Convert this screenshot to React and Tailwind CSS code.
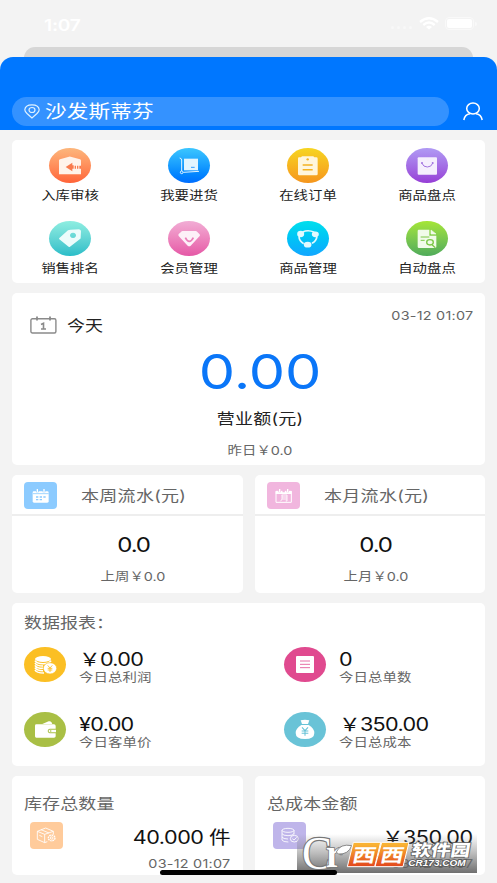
import React from "react";
import clsx from "clsx";

// Wide text: every label of the screen is set 1.2x wider than the font
function Wide({ className, children }) {
  return (
    <span
      className={clsx(
        "block w-fit scale-x-[1.2] whitespace-nowrap leading-none",
        className
      )}
    >
      {children}
    </span>
  );
}

const menuItems = [
  {
    label: "入库审核",
    color: "bg-linear-to-b from-[#fcb67c] to-[#ff6338]",
    icon: (
      <>
        <path d="M30 37Q30 35 33 34L60 26Q62 25 65 26L93 34Q96 35 96 38V79H30Z" fill="#fff3ea" />
        <path d="M50 57L70 44V52H74V62H70V70Z" fill="#f97a4c" />
        <path d="M77 53h4v9h-4zM84 53h4v9h-4zM91 53h5v9h-5z" fill="#f97a4c" />
      </>
    ),
  },
  {
    label: "我要进货",
    color: "bg-linear-to-b from-[#3cc6ff] to-[#006dff]",
    icon: (
      <>
        <rect x="48" y="32" width="42" height="35" fill="#e3f5ff" />
        <path d="M35 30Q41 31 41 36V69M46 73L93 70" stroke="#e3f5ff" strokeWidth="3" fill="none" />
        <circle cx="41" cy="73" r="4" stroke="#e3f5ff" strokeWidth="3" fill="none" />
        <path d="M69 58h11" stroke="#2e9cff" strokeWidth="3" />
      </>
    ),
  },
  {
    label: "在线订单",
    color: "bg-linear-to-b from-[#f6d522] to-[#f5951d]",
    icon: (
      <>
        <path d="M36 28H42L45 25H79L82 28H88Q92 28 92 32V78Q92 82 88 82H37Q33 82 33 78V32Q33 28 36 28Z" fill="#fff6dc" />
        <path d="M47 51h30M47 65h30" stroke="#f4b322" strokeWidth="4.5" />
        <circle cx="62" cy="34" r="3.5" fill="#f4b322" />
      </>
    ),
  },
  {
    label: "商品盘点",
    color: "bg-linear-to-b from-[#b09af4] to-[#963dd6]",
    icon: (
      <>
        <rect x="35" y="28" width="58" height="52" rx="3" fill="#f5effd" />
        <path d="M48 46Q52 57 64 57T80 46" stroke="#a172df" strokeWidth="3" fill="none" />
        <circle cx="48" cy="45" r="3" fill="#a172df" />
        <circle cx="80" cy="45" r="3" fill="#a172df" />
      </>
    ),
  },
  {
    label: "销售排名",
    color: "bg-linear-to-b from-[#8eeee1] to-[#27bdc8]",
    icon: (
      <path
        d="M31 51L57 28Q60 26 64 26L90 25Q96 26 96 31L95 50Q95 53 92 55L63 77Q60 79 57 76L31 55Q29 53 31 51ZM72 35a9 8 0 1 0 .1 0Z"
        fill="#ecfcfb"
        fillRule="evenodd"
      />
    ),
  },
  {
    label: "会员管理",
    color: "bg-linear-to-b from-[#f1add5] to-[#e557a6]",
    icon: (
      <>
        <path d="M44 30H83Q86 30 88 33L95 40Q97 43 95 45L68 74Q64 78 59 74L32 45Q30 42 32 39L39 33Q41 30 44 30Z" fill="#fdf0f8" />
        <path d="M52 50Q57 61 64 61T76 50" stroke="#eb7db9" strokeWidth="5" fill="none" />
      </>
    ),
  },
  {
    label: "商品管理",
    color: "bg-linear-to-b from-[#03dfec] to-[#12a6ff]",
    icon: (
      <g fill="none" stroke="#e2faff" strokeWidth="5">
        <path d="M47 33Q64 25 82 34M90 46Q88 60 75 67M36 46Q36 60 50 68" />
        <ellipse cx="41" cy="39" rx="8" ry="7" fill="#e2faff" />
        <ellipse cx="85" cy="40" rx="8" ry="6" fill="#e2faff" />
        <ellipse cx="62" cy="71" rx="9" ry="6" fill="#e2faff" />
      </g>
    ),
  },
  {
    label: "自动盘点",
    color: "bg-linear-to-b from-[#a5e635] to-[#4fab5a]",
    icon: (
      <>
        <path d="M38 26H70V44H91V77Q91 81 87 81H39Q35 81 35 77V30Q35 26 38 26Z" fill="#f1fbe9" />
        <path d="M75 27L90 39H75Z" fill="#f1fbe9" stroke="#f1fbe9" strokeWidth="2" />
        <path d="M44 48h26M44 58h12" stroke="#7cc847" strokeWidth="3" />
        <ellipse cx="72" cy="64" rx="10" ry="8" stroke="#7cc847" strokeWidth="4" fill="none" />
        <path d="M78 71l10 9" stroke="#7cc847" strokeWidth="4" />
      </>
    ),
  },
];

const reports = [
  {
    value: "￥0.00",
    label: "今日总利润",
    color: "bg-[#fbbf24]",
    icon: (
      <>
        <ellipse cx="57" cy="36" rx="24" ry="9" fill="#fff" />
        <path
          d="M33 41Q37 50 57 50T81 41M33 48Q37 57 57 57M33 55Q37 64 57 64M33 62Q37 71 57 71M33 69Q37 78 60 78"
          stroke="#fff"
          strokeWidth="4.5"
          fill="none"
        />
        <ellipse cx="78" cy="64" rx="20" ry="17" fill="#fff" stroke="#fbbf24" strokeWidth="2" />
        <path d="M71 55l7 8 7-8M78 63v12M71 64h14M71 69h14" stroke="#fbbf24" strokeWidth="2.6" fill="none" />
      </>
    ),
  },
  {
    value: "0",
    label: "今日总单数",
    color: "bg-[#e04a8f]",
    icon: (
      <>
        <rect x="36" y="27" width="54" height="51" rx="3" fill="#fff" />
        <path d="M48 42h30M48 52h30M48 62h30" stroke="#e04a8f" strokeWidth="2.4" />
      </>
    ),
  },
  {
    value: "¥0.00",
    label: "今日客单价",
    color: "bg-[#a9bf45]",
    icon: (
      <>
        <path d="M55 36L74 28Q79 26 82 31L85 36Z" fill="#fff" />
        <path d="M37 37H90Q95 37 95 42V50H77Q71 51 71 57T77 64H95V73Q95 77 90 77H37Q33 77 33 73V41Q33 37 37 37Z" fill="#fff" />
        <path d="M78 53H96V61H78Q74 61 74 57T78 53Z" fill="#fff" />
        <circle cx="80" cy="57" r="2.5" fill="#a9bf45" />
      </>
    ),
  },
  {
    value: "￥350.00",
    label: "今日总成本",
    color: "bg-[#69c3d7]",
    icon: (
      <>
        <path d="M50 25Q63 21 76 25L72 36H54Z" fill="#fff" />
        <path d="M52 39H74Q91 49 91 63Q91 81 63 81T35 63Q35 49 52 39Z" fill="#fff" />
        <path d="M54 46l9 10 9-10M63 56v15M53 57h20M53 64h20" stroke="#69c3d7" strokeWidth="3.2" fill="none" />
      </>
    ),
  },
];

function RoundIcon({ color, children }) {
  return (
    <div className={clsx("h-[35px] w-[42px] shrink-0 rounded-[50%]", color)}>
      <svg viewBox="0 0 126 105" className="h-full w-full">
        {children}
      </svg>
    </div>
  );
}

function StatusBar() {
  return (
    <div className="flex h-[47px] items-start justify-between pt-[17px] pr-[20px] pl-[44px] text-white">
      <Wide className="origin-left text-base font-semibold tracking-[-0.2px]">1:07</Wide>
      <div className="flex items-center gap-[6px]">
        <div className="mt-[7px] mr-px flex gap-[3px]">
          {[0, 1, 2, 3].map((i) => (
            <span key={i} className="h-[3px] w-[3px] rounded-full bg-[#f8f8f8]" />
          ))}
        </div>
        <svg viewBox="0 0 20 13" className="h-[13px] w-5" fill="none" stroke="#fff" strokeWidth="2.4">
          <path d="M1 5Q10-2.5 19 5M4.3 8Q10 3.2 15.7 8" />
          <path d="M7 10Q10 7.5 13 10L10 12.6Z" fill="#fff" stroke="none" />
        </svg>
        <div className="flex items-center gap-px">
          <div className="h-[13px] w-[29px] rounded-[4px] border border-[#f9f9f9] p-px">
            <div className="h-full rounded-[2px] bg-white" />
          </div>
          <div className="h-1 w-[2px] rounded-r bg-[#f9f9f9]" />
        </div>
      </div>
    </div>
  );
}

function Header() {
  return (
    <div>
      <div className="mx-6 h-[11px] rounded-t-[11px] bg-[#d6d6d6]" />
      <div className="-mt-px flex h-[73px] items-end rounded-t-[13px] bg-[#0077ff] pr-3 pb-1 pl-3">
        <div className="flex h-[29px] w-[437px] items-center rounded-full bg-[#3492ff] pl-[12px] text-white">
          <svg viewBox="0 0 16 15" className="h-[15px] w-4" fill="none" stroke="#dff2ff" strokeWidth="1.2">
            <path d="M8 14L3 9.5Q.8 7.3.8 5.8Q1.3.8 8 .8T15.2 5.8Q15.2 7.3 13 9.5Z" />
            <ellipse cx="8" cy="6" rx="3" ry="2.5" />
          </svg>
          <Wide className="mt-px ml-[5px] origin-left text-lg leading-none font-normal tracking-[0.1px]">
            沙发斯蒂芬
          </Wide>
        </div>
        <svg
          viewBox="0 0 20 19"
          className="mb-[5px] ml-[14px] h-[19px] w-5"
          fill="none"
          stroke="#fff"
          strokeWidth="1.5"
        >
          <ellipse cx="10" cy="6.5" rx="6.3" ry="5.5" />
          <path d="M.8 18Q1.8 12.5 7 11.8M19.2 18Q18.2 12.5 13 11.8" />
        </svg>
      </div>
    </div>
  );
}

function MenuCard() {
  return (
    <div className="grid h-[143px] grid-cols-[repeat(4,119px)] justify-center rounded-[5px] bg-white pt-[8px]">
      {menuItems.map((item) => (
        <div key={item.label} className="flex h-[73px] flex-col items-center">
          <RoundIcon color={item.color}>{item.icon}</RoundIcon>
          <Wide className="mt-[7px] text-xs text-[#222]">{item.label}</Wide>
        </div>
      ))}
    </div>
  );
}

function TodayCard() {
  return (
    <div className="h-[172px] rounded-[5px] bg-white">
      <div className="flex h-[54px] justify-between pr-3 pl-[18px]">
        <div className="flex items-center pt-[10px]">
          <svg viewBox="0 0 27 18" className="h-[18px] w-[27px]" fill="none" stroke="#8a8a8a" strokeWidth="1.4">
            <rect x=".9" y="2.8" width="25" height="14.2" rx="1.5" />
            <path d="M7 .5v4M20 .5v4" strokeWidth="1.8" />
            <path d="M11 8.5L13.500 7.300V13M11 13h5" strokeWidth="1.6" />
          </svg>
          <Wide className="ml-[10px] origin-left text-[15px] text-[#222]">今天</Wide>
        </div>
        <Wide className="mt-[17px] origin-right text-xs tracking-[0.2px] text-[#666]">
          03-12 01:07
        </Wide>
      </div>
      <div className="flex flex-col items-center pl-[23px]">
        <Wide className="mt-px text-[48px] text-[#0a76f8]">0.00</Wide>
        <Wide className="mt-[15px] text-[15px] tracking-[0.2px] text-[#222]">营业额(元)</Wide>
        <Wide className="mt-[19px] text-xs text-[#666]">昨日￥0.0</Wide>
      </div>
    </div>
  );
}

function FlowCard({ title, value, previous, color, children }) {
  return (
    <div className="h-[118px] flex-1 rounded-[5px] bg-white">
      <div className="flex h-[41px] items-center border-b-2 border-[#eee] pl-3">
        <div className={clsx("mt-px h-[27px] w-[33px] rounded-[4px]", color)}>
          <svg viewBox="0 0 99 81" className="h-full w-full">
            {children}
          </svg>
        </div>
        <Wide className="mt-px ml-[24px] origin-left text-[15px] tracking-[0.25px] text-[#666]">
          {title}
        </Wide>
      </div>
      <div className="flex flex-col items-center pt-[19px] pl-3">
        <Wide className="text-xl tracking-[-1px] text-[#111]">{value}</Wide>
        <Wide className="mt-[16px] text-xs text-[#666]">{previous}</Wide>
      </div>
    </div>
  );
}

function ReportCard() {
  return (
    <div className="h-[163px] rounded-[5px] bg-white pt-[12px] pl-3">
      <Wide className="origin-left text-[15px] text-[#666]">数据报表：</Wide>
      <div className="mt-[17px] grid grid-cols-[260px_1fr] gap-y-[30px]">
        {reports.map((item) => (
          <div key={item.label} className="flex h-[35px]">
            <RoundIcon color={item.color}>{item.icon}</RoundIcon>
            <div className="mt-[4px] ml-[12.5px] flex flex-col items-start">
              <Wide className="origin-left text-lg leading-[18px] tracking-[-0.55px] text-[#111]">
                {item.value}
              </Wide>
              <Wide className="mt-[3px] origin-left text-xs tracking-[0.1px] text-[#666]">
                {item.label}
              </Wide>
            </div>
          </div>
        ))}
      </div>
    </div>
  );
}

function TotalCard({ title, value, color, children }) {
  return (
    <div className="h-[99px] flex-1 rounded-[5px] bg-white pt-[20px] pr-3 pl-3">
      <Wide className="origin-left text-[15px] tracking-[0.1px] text-[#666]">{title}</Wide>
      <div className="mt-[11px] flex items-start justify-between pl-[6px]">
        <div className={clsx("h-[27px] w-[33px] rounded-[4px]", color)}>
          <svg viewBox="0 0 99 81" className="h-full w-full" fill="none" stroke="#fff" strokeWidth="2.6">
            {children}
          </svg>
        </div>
        <div className="flex flex-col items-end pt-[7px]">
          <Wide className="origin-right text-lg leading-[18px] tracking-[-0.4px] text-[#111]">
            {value}
          </Wide>
          <Wide className="mt-[11px] origin-right text-xs tracking-[0.2px] text-[#666]">
            03-12 01:07
          </Wide>
        </div>
      </div>
    </div>
  );
}

function SiteBadge() {
  return (
    <div className="absolute top-[834px] left-[297px] h-[39px] w-[180px] bg-linear-to-b from-[#777]/0 via-[#777]/50 to-[#606060]/90">
      <svg viewBox="0 0 540 117" className="h-full w-full overflow-visible">
        <defs>
          <linearGradient id="badgeOrange" x1="0" y1="0" x2="0" y2="1">
            <stop offset="0.1" stopColor="#f9b233" />
            <stop offset="1" stopColor="#e2451c" />
          </linearGradient>
        </defs>
        <text
          x="15"
          y="104"
          fontFamily="Liberation Serif, serif"
          fontSize="142"
          textLength="90"
          lengthAdjust="spacingAndGlyphs"
          fill="#fff"
          stroke="#777"
          strokeWidth="7"
          paintOrder="stroke"
        >
          C
        </text>
        <text
          x="86"
          y="98"
          fontFamily="Liberation Serif, serif"
          fontSize="118"
          fontWeight="700"
          textLength="50"
          lengthAdjust="spacingAndGlyphs"
          fill="#fff"
          stroke="#777"
          strokeWidth="5"
          paintOrder="stroke"
        >
          r
        </text>
        <path d="M118 54Q130 28 164 35Q154 62 124 60Z" fill="#fff" stroke="#777" strokeWidth="2.5" />
        <path d="M169 25H251L233 98H151Z" fill="url(#badgeOrange)" stroke="#fff" strokeWidth="3" />
        <path d="M254 25H336L318 98H234Z" fill="url(#badgeOrange)" stroke="#fff" strokeWidth="3" />
        <g fontFamily="Noto Sans CJK SC, sans-serif" fontWeight="700" fill="#fff">
          <text transform="translate(163 83) skewX(-12)" fontSize="56" textLength="70" lengthAdjust="spacingAndGlyphs">西</text>
          <text transform="translate(247 83) skewX(-12)" fontSize="56" textLength="70" lengthAdjust="spacingAndGlyphs">西</text>
          <text
            transform="translate(341 66) skewX(-10)"
            fontSize="48"
            fontWeight="900"
            textLength="176"
            lengthAdjust="spacingAndGlyphs"
            stroke="#666"
            strokeWidth="5"
            paintOrder="stroke"
          >
            软件园
          </text>
        </g>
        <text
          x="334"
          y="96"
          fontFamily="Liberation Sans, sans-serif"
          fontSize="27"
          fontWeight="700"
          fontStyle="italic"
          textLength="172"
          lengthAdjust="spacingAndGlyphs"
          fill="#fff"
          stroke="#555"
          strokeWidth="5"
          paintOrder="stroke"
        >
          CR173.COM
        </text>
      </svg>
    </div>
  );
}

export default function App() {
  return (
    <div className="relative h-[883px] w-[497px] overflow-hidden bg-[#f3f3f3] font-['Inter','Noto_Sans_CJK_SC',sans-serif]">
      <StatusBar />
      <Header />

      <div className="flex flex-col gap-[10px] px-3 pt-[10px]">
        <MenuCard />
        <TodayCard />

        <div className="flex gap-[12px]">
          <FlowCard title="本周流水(元)" value="0.0" previous="上周￥0.0" color="bg-[#8ccbff]">
            <path d="M29 28H70Q74 28 74 32V58Q74 62 70 62H30Q26 62 26 58V32Q26 28 29 28Z" fill="#fff" />
            <path d="M27 35H74" stroke="#8ccbff" strokeWidth="2.5" />
            <path d="M40 21v10M60 21v10" stroke="#8ccbff" strokeWidth="8" />
            <path d="M40 21v9M60 21v9" stroke="#fff" strokeWidth="4" />
            <path d="M36 45h7M47 45h7M58 45h7M36 53h7M47 53h7" stroke="#8ccbff" strokeWidth="4" />
          </FlowCard>
          <FlowCard title="本月流水(元)" value="0.0" previous="上月￥0.0" color="bg-[#f1b6de]">
            <path d="M27 28H73V61H27Z" fill="none" stroke="#fff" strokeWidth="3" />
            <path d="M26 27H74V36H26Z" fill="#fff" />
            <path d="M38 21v10M50 21v10M62 21v10" stroke="#f1b6de" strokeWidth="7" />
            <path d="M38 21v9M62 21v9" stroke="#fff" strokeWidth="4" />
            <path d="M44 39H60V57H56M45 39V49Q45 54 40 58M45 45H60M45 51H60" fill="none" stroke="#fff" strokeWidth="2.6" />
          </FlowCard>
        </div>

        <ReportCard />

        <div className="flex gap-[12px]">
          <TotalCard title="库存总数量" value="40.000 件" color="bg-[#ffcb9b]">
            <path d="M22 28L47 18L70 28V38M22 28L44 37L70 28M22 28V52L44 62L52 59M44 37V62M33 23L57 33M28 40l9 4" />
            <ellipse cx="65" cy="48" rx="10" ry="8.5" strokeWidth="4" strokeDasharray="5 2" />
            <ellipse cx="65" cy="48" rx="4" ry="3.5" />
          </TotalCard>
          <TotalCard title="总成本金额" value="￥350.00" color="bg-[#bfb5ea]">
            <ellipse cx="45" cy="25" rx="18" ry="6" />
            <path d="M27 25V54Q30 60 46 60M63 25V37M27 35Q30 41 45 41T63 35M27 45Q30 51 45 51" />
            <ellipse cx="64" cy="50" rx="12" ry="10" />
            <path d="M58 50l5 4 8-8" />
          </TotalCard>
        </div>
      </div>

      <SiteBadge />
      <div className="absolute top-[870px] left-[160px] h-[5px] w-[177px] rounded-full bg-black" />
    </div>
  );
}
